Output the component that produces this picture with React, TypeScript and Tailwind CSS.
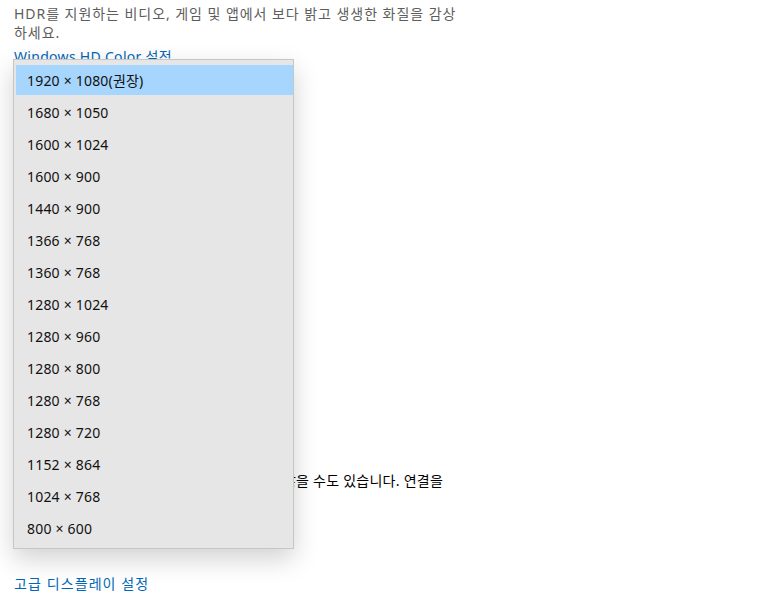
import React from "react";

const resolutions = [
  "1920 × 1080(권장)",
  "1680 × 1050",
  "1600 × 1024",
  "1600 × 900",
  "1440 × 900",
  "1366 × 768",
  "1360 × 768",
  "1280 × 1024",
  "1280 × 960",
  "1280 × 800",
  "1280 × 768",
  "1280 × 720",
  "1152 × 864",
  "1024 × 768",
  "800 × 600",
];

export default function App() {
  return (
    <div
      className="relative w-[763px] h-[599px] bg-white overflow-hidden text-[14px]"
      style={{ fontFamily: '"Noto Sans", "Noto Sans CJK KR", sans-serif' }}
    >
      <div className="pl-[14px] pt-[4px] w-[500px] flex flex-col">
        <p className="leading-[19px] text-[#5d5d5d] tracking-[0.95px]">
          HDR를 지원하는 비디오, 게임 및 앱에서 보다 밝고 생생한 화질을 감상
          <br />
          하세요.
        </p>
        <a className="mt-[5px] leading-[19px] text-[#0067b8] tracking-[0.3px]">
          Windows HD Color 설정
        </a>

        <div className="mt-[40px] h-[12px] w-[2px] bg-[#9a9a9a] -ml-[1px]" />

        <p className="mt-[353px] leading-[20px] text-black tracking-[0.25px]">
          오래된 디스플레이는 자동으로 항상 연결되지 않을 수도 있습니다. 연결을
        </p>
        <a className="mt-[83px] leading-[20px] text-[#0067b8] tracking-[1.1px]">
          고급 디스플레이 설정
        </a>
      </div>

      <div className="absolute left-[13px] top-[59px] w-[281px] border border-[#c6c6c6] bg-[#e6e6e6] pl-[2px] py-[4px] shadow-[0_10px_24px_rgba(0,0,0,0.18)]">
        {resolutions.map((r, i) => (
          <div key={r} className="h-8 py-[1px]">
            <div
              className={
                "h-[30px] flex items-center pl-[11px] text-[#111] tracking-[0.2px] " +
                (i === 0 ? "bg-[#a6d5fd]" : "")
              }
            >
              {r}
            </div>
          </div>
        ))}
      </div>
    </div>
  );
}
